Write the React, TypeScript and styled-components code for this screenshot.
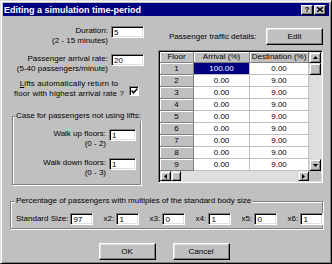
import { Fragment } from "react";
import styled, { createGlobalStyle } from "styled-components";

const GlobalStyle = createGlobalStyle`
  html, body {
    margin: 0;
    padding: 0;
    background: #c0c0c0;
  }
  body {
    font-family: "Liberation Sans", Arial, sans-serif;
    font-size: 8px;
    color: #000;
  }
`;

const Window = styled.div`
  box-sizing: border-box;
  width: 332px;
  height: 264px;
  background: #c0c0c0;
  border: 1px solid;
  border-color: #dfdfdf #000 #000 #dfdfdf;
  box-shadow: inset 1px 1px #fff, inset -1px -1px #808080;
  padding: 2px;
  display: flex;
  flex-direction: column;
`;

const TitleBar = styled.div`
  height: 13px;
  flex: none;
  background: #000080;
  color: #fff;
  display: flex;
  align-items: center;
  justify-content: space-between;
  padding: 0 3px 0 1px;
`;

const Title = styled.span`
  font-weight: bold;
  font-size: 9px;
  white-space: nowrap;
`;

const TitleButtons = styled.div`
  display: flex;
  gap: 1px;
`;

const TitleButton = styled.div`
  box-sizing: border-box;
  width: 12px;
  height: 10px;
  background: #c0c0c0;
  color: #000;
  border: 1px solid;
  border-color: #fff #000 #000 #fff;
  box-shadow: inset -1px -1px #808080;
  display: flex;
  align-items: center;
  justify-content: center;
  font-weight: bold;
  font-size: 8px;
  line-height: 8px;
`;

const TopSection = styled.div`
  display: flex;
`;

const LeftColumn = styled.div`
  width: 155px;
  display: flex;
  flex-direction: column;
`;

const RightColumn = styled.div`
  width: 165px;
  display: flex;
  flex-direction: column;
`;

const FieldRow = styled.div<{ $top: number; $right: number }>`
  display: flex;
  justify-content: flex-end;
  align-items: flex-start;
  gap: 3px;
  margin-top: ${(p) => p.$top}px;
  padding-right: ${(p) => p.$right}px;
`;

const FieldLabel = styled.div`
  text-align: right;
  line-height: 10px;
  white-space: nowrap;
`;

const TextBox = styled.input<{ $w: number }>`
  box-sizing: border-box;
  width: ${(p) => p.$w}px;
  height: 12px;
  flex: none;
  margin: 0;
  padding: 0 2px;
  font: inherit;
  line-height: 10px;
  color: #000;
  background: #fff;
  border: 1px solid;
  border-color: #808080 #fff #fff #808080;
  box-shadow: inset 1px 1px #000, inset -1px -1px #dfdfdf;
  outline: none;
`;

const CheckRow = styled.div`
  display: flex;
  align-items: flex-end;
  gap: 5px;
  margin-top: 5px;
  padding-left: 11px;
`;

const CheckText = styled.div`
  text-align: center;
  line-height: 10px;
  letter-spacing: 0.1px;
  white-space: nowrap;
`;

const CheckBox = styled.span`
  box-sizing: border-box;
  width: 10px;
  height: 10px;
  margin-bottom: 3px;
  background: #fff;
  border: 1px solid;
  border-color: #808080 #fff #fff #808080;
  box-shadow: inset 1px 1px #000;
  display: flex;
  align-items: center;
  justify-content: center;
`;

const GroupBox = styled.fieldset<{ $top: number; $left: number; $width: number }>`
  box-sizing: border-box;
  min-width: 0;
  width: ${(p) => p.$width}px;
  margin: ${(p) => p.$top}px 0 0 ${(p) => p.$left}px;
  padding: 0;
  border: 1px solid #808080;
  box-shadow: 1px 1px 0 #fff, inset 1px 1px 0 #fff;
`;

const Legend = styled.legend<{ $indent: number }>`
  margin-left: ${(p) => p.$indent}px;
  padding: 0 1px;
  line-height: 10px;
  background: #c0c0c0;
  white-space: nowrap;
`;

const WalkBody = styled.div`
  display: flex;
  flex-direction: column;
  padding: 8px 0 6px 0;
`;

const TrafficHeader = styled.div`
  display: flex;
  align-items: center;
  justify-content: space-between;
  margin-top: 12px;
  padding-left: 11px;
`;

const Button = styled.div<{ $w: number }>`
  box-sizing: border-box;
  width: ${(p) => p.$w}px;
  height: 17px;
  background: #c0c0c0;
  border: 1px solid;
  border-color: #fff #000 #000 #fff;
  box-shadow: inset -1px -1px #808080, inset 1px 1px #dfdfdf;
  display: flex;
  align-items: center;
  justify-content: center;
  line-height: 10px;
`;

const TableFrame = styled.div`
  box-sizing: border-box;
  width: 165px;
  height: 133px;
  margin-top: 5px;
  padding: 1px;
  border: 1px solid;
  border-color: #808080 #fff #fff #808080;
  box-shadow: inset 1px 1px #000, inset -1px -1px #dfdfdf;
  background: #c0c0c0;
  display: flex;
  flex-direction: column;
`;

const TableMain = styled.div`
  display: flex;
  height: 119px;
`;

const Grid = styled.div`
  display: grid;
  grid-template-columns: 34px 56px 59px;
  grid-template-rows: 11px repeat(9, 12px);
  background: #fff;
`;

const HeadCell = styled.div`
  box-sizing: border-box;
  background: #c0c0c0;
  border-right: 1px solid #808080;
  border-bottom: 1px solid #808080;
  box-shadow: inset 1px 1px #fff;
  display: flex;
  align-items: center;
  justify-content: center;
  line-height: 10px;
  white-space: nowrap;
  overflow: hidden;
`;

const DataCell = styled.div<{ $selected?: boolean }>`
  box-sizing: border-box;
  background: ${(p) => (p.$selected ? "#000080" : "#fff")};
  color: ${(p) => (p.$selected ? "#fff" : "#000")};
  border-right: 1px solid #c0c0c0;
  border-bottom: 1px solid #c0c0c0;
  display: flex;
  align-items: center;
  justify-content: center;
  line-height: 10px;
`;

const VScroll = styled.div`
  width: 12px;
  display: flex;
  flex-direction: column;
`;

const HScrollRow = styled.div`
  display: flex;
  height: 10px;
`;

const HScroll = styled.div`
  width: 149px;
  display: flex;
`;

const ScrollButton = styled.div<{ $w: number; $h: number }>`
  box-sizing: border-box;
  flex: none;
  width: ${(p) => p.$w}px;
  height: ${(p) => p.$h}px;
  background: #c0c0c0;
  border: 1px solid;
  border-color: #dfdfdf #000 #000 #dfdfdf;
  box-shadow: inset 1px 1px #fff, inset -1px -1px #808080;
  display: flex;
  align-items: center;
  justify-content: center;
`;

const Track = styled.div`
  flex: 1;
  background: #dedede;
`;

const Corner = styled.div`
  width: 12px;
  background: #c0c0c0;
`;

const SizeBody = styled.div`
  display: flex;
  align-items: center;
  gap: 10px;
  padding: 7px 0 3px 5px;
`;

const SizeField = styled.div`
  display: flex;
  align-items: center;
  gap: 2px;
  white-space: nowrap;
`;

const SizeLabel = styled.span<{ $w?: number }>`
  width: ${(p) => (p.$w ? `${p.$w}px` : "auto")};
  line-height: 10px;
`;

const ButtonRow = styled.div`
  display: flex;
  justify-content: center;
  gap: 17px;
  margin-top: 14px;
  padding-right: 4px;
`;

type ArrowDir = "up" | "down" | "left" | "right";

function Arrow({ dir }: { dir: ArrowDir }) {
  const vertical = dir === "up" || dir === "down";
  const points = {
    up: "0,3 2.5,0 5,3",
    down: "0,0 2.5,3 5,0",
    left: "3,0 0,2.5 3,5",
    right: "0,0 3,2.5 0,5",
  }[dir];
  return (
    <svg width={vertical ? 5 : 3} height={vertical ? 3 : 5} viewBox={vertical ? "0 0 5 3" : "0 0 3 5"}>
      <polygon points={points} fill="#000" />
    </svg>
  );
}

type FieldProps = {
  label: string;
  hint: string;
  value: string;
  width: number;
  top: number;
  right: number;
};

function Field({ label, hint, value, width, top, right }: FieldProps) {
  return (
    <FieldRow $top={top} $right={right}>
      <FieldLabel>
        {label}
        <br />
        {hint}
      </FieldLabel>
      <TextBox $w={width} defaultValue={value} readOnly />
    </FieldRow>
  );
}

const floors = Array.from({ length: 9 }, (_, i) => ({
  floor: i + 1,
  arrival: i === 0 ? "100.00" : "0.00",
  destination: i === 0 ? "0.00" : "9.00",
}));

const sizes = [
  { label: "x2:", value: "1" },
  { label: "x3:", value: "0" },
  { label: "x4:", value: "1" },
  { label: "x5:", value: "0" },
  { label: "x6:", value: "1" },
];

export default function App() {
  return (
    <>
      <GlobalStyle />
      <Window>
        <TitleBar>
          <Title>Editing a simulation time-period</Title>
          <TitleButtons>
            <TitleButton>?</TitleButton>
            <TitleButton>
              <svg width="6" height="5" viewBox="0 0 6 5">
                <path d="M0 0 L6 5 M6 0 L0 5" stroke="#000" strokeWidth="1.4" />
              </svg>
            </TitleButton>
          </TitleButtons>
        </TitleBar>

        <TopSection>
          <LeftColumn>
            <Field label="Duration:" hint="(2 - 15 minutes)" value="5" width={33} top={10} right={14} />
            <Field label="Passenger arrival rate:" hint="(5-40 passengers/minute)" value="20" width={33} top={8} right={14} />
            <CheckRow>
              <CheckText>
                <u>L</u>ifts automatically return to
                <br />
                floor with highest arrival rate ?
              </CheckText>
              <CheckBox>
                <svg width="7" height="6" viewBox="0 0 7 6">
                  <polyline points="0.5,2.5 2.5,4.8 6.5,0.5" fill="none" stroke="#000" strokeWidth="1.5" />
                </svg>
              </CheckBox>
            </CheckRow>
            <GroupBox $top={12} $left={9} $width={129}>
              <Legend $indent={2}>Case for passengers not using lifts:</Legend>
              <WalkBody>
                <Field label="Walk up floors:" hint="(0 - 2)" value="1" width={27} top={0} right={4} />
                <Field label="Walk down floors:" hint="(0 - 3)" value="1" width={27} top={9} right={4} />
              </WalkBody>
            </GroupBox>
          </LeftColumn>

          <RightColumn>
            <TrafficHeader>
              <span>Passenger traffic details:</span>
              <Button $w={57}>Edit</Button>
            </TrafficHeader>
            <TableFrame>
              <TableMain>
                <Grid>
                  <HeadCell>Floor</HeadCell>
                  <HeadCell>Arrival (%)</HeadCell>
                  <HeadCell>Destination (%)</HeadCell>
                  {floors.map((row) => (
                    <Fragment key={row.floor}>
                      <HeadCell>{row.floor}</HeadCell>
                      <DataCell $selected={row.floor === 1}>{row.arrival}</DataCell>
                      <DataCell>{row.destination}</DataCell>
                    </Fragment>
                  ))}
                </Grid>
                <VScroll>
                  <ScrollButton $w={12} $h={11}>
                    <Arrow dir="up" />
                  </ScrollButton>
                  <ScrollButton $w={12} $h={12} />
                  <Track />
                  <ScrollButton $w={12} $h={12}>
                    <Arrow dir="down" />
                  </ScrollButton>
                </VScroll>
              </TableMain>
              <HScrollRow>
                <HScroll>
                  <ScrollButton $w={11} $h={10}>
                    <Arrow dir="left" />
                  </ScrollButton>
                  <ScrollButton $w={10} $h={10} />
                  <Track />
                  <ScrollButton $w={11} $h={10}>
                    <Arrow dir="right" />
                  </ScrollButton>
                </HScroll>
                <Corner />
              </HScrollRow>
            </TableFrame>
          </RightColumn>
        </TopSection>

        <GroupBox $top={11} $left={7} $width={313}>
          <Legend $indent={4}>Percentage of passengers with multiples of the standard body size</Legend>
          <SizeBody>
            <SizeField>
              <SizeLabel>Standard Size:</SizeLabel>
              <TextBox $w={23} defaultValue="97" readOnly />
            </SizeField>
            {sizes.map((s) => (
              <SizeField key={s.label}>
                <SizeLabel $w={11}>{s.label}</SizeLabel>
                <TextBox $w={23} defaultValue={s.value} readOnly />
              </SizeField>
            ))}
          </SizeBody>
        </GroupBox>

        <ButtonRow>
          <Button $w={57}>OK</Button>
          <Button $w={57}>Cancel</Button>
        </ButtonRow>
      </Window>
    </>
  );
}
